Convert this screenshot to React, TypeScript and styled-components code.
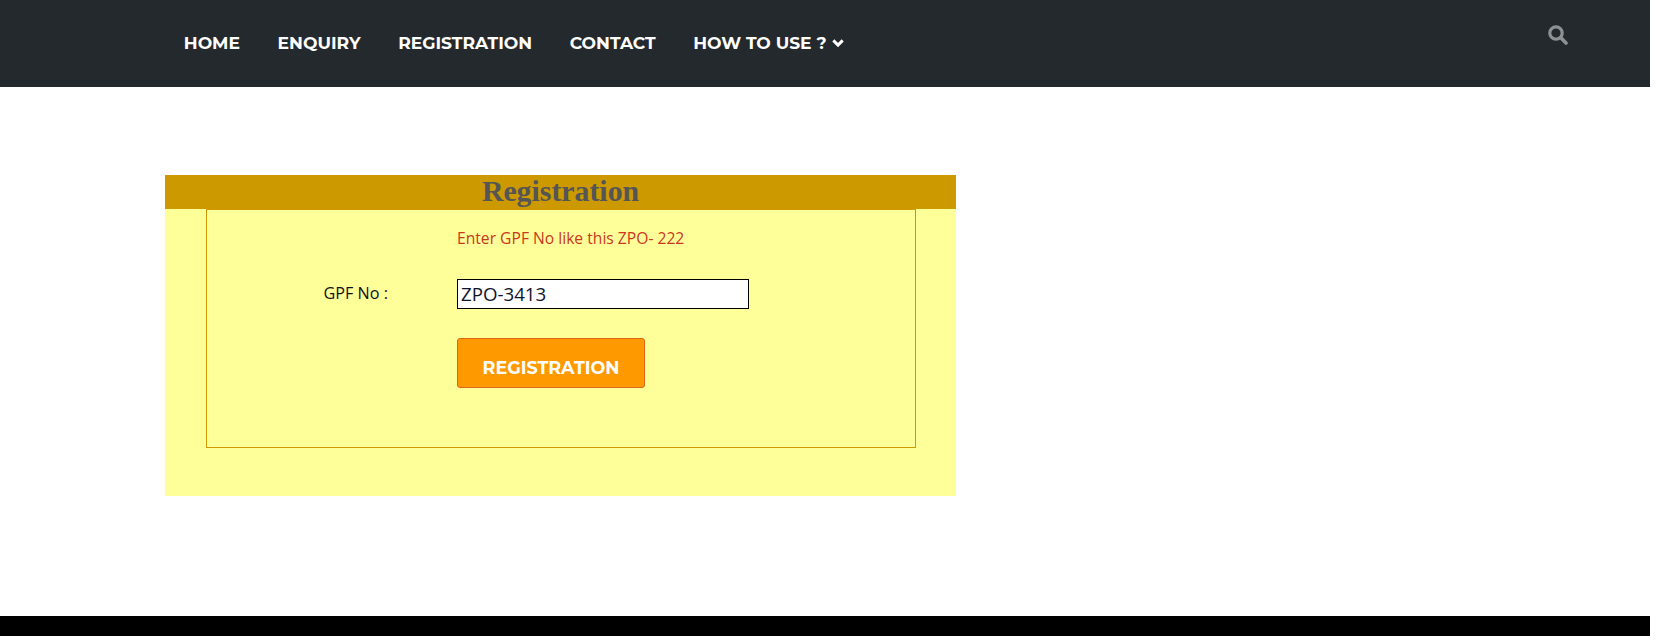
import React from "react";
import styled, { createGlobalStyle } from "styled-components";

const Global = createGlobalStyle`
  html, body { margin: 0; padding: 0; background: #fff; overflow: hidden; }
  body { font-family: "Open Sans", "Liberation Sans", sans-serif; }
`;
const Page = styled.div`
  width: 1650px; height: 642px; display: flex; flex-direction: column; background: #fff;
`;
const Header = styled.header`
  height: 87px; background: #24292d; display: flex; justify-content: space-between;
  padding: 0 82px 0 165px; flex: none;
`;
const Nav = styled.nav`display: flex; align-items: center; height: 85px;`;
const NavLink = styled.a`
  font-family: Montserrat, Inter, "Liberation Sans", sans-serif; font-weight: 700; font-size: 17.15px;
  color: #fff; padding: 0 18.8px; display: flex; align-items: center; gap: 5px;
`;
const SearchBtn = styled.div`color: #8e9194; padding-top: 25px; line-height: 0;`;
const Main = styled.main`flex: 1; padding-top: 88px;`;
const Panel = styled.section`
  margin-left: 165px; width: 791px; height: 321px; background: #ffff99;
`;
const Title = styled.h2`
  margin: 0; height: 34px; background: #cc9900; color: #555; text-align: center;
  font: 700 29.8px/32px "Liberation Serif", serif;
`;
const Frame = styled.div`
  margin: 0 40px 0 41px; height: 239px; box-sizing: border-box; border: 1px solid #cc9900;
  display: grid; grid-template-columns: 250px 1fr; align-content: start; padding-top: 18px;
`;
const Hint = styled.div`
  grid-column: 2; color: #c9381c; font-size: 15.65px; line-height: 20px; height: 51px;
`;
const Label = styled.label`
  color: #111; font-size: 16.2px; text-align: right; padding-right: 69px; line-height: 28px;
`;
const Input = styled.input`
  width: 292px; height: 30px; box-sizing: border-box; border: 1px solid #000; background: #fff;
  padding: 0 3px 2px; font: 18.7px "Open Sans", sans-serif; color: #10142a; outline: 0; display: block;
`;
const Button = styled.button`
  grid-column: 2; width: 188px; height: 50px; margin-top: 29px; padding: 8px 0 0; background: #ff9900;
  border: 1px solid #e0641a; border-radius: 3px; color: #fff;
  font: 700 17.5px Montserrat, Inter, "Liberation Sans", sans-serif;
`;
const Footer = styled.footer`height: 20px; background: #000; margin-bottom: 6px; width: 1650px; flex: none;`;

const Chevron = () => (
  <svg width="12" height="12" viewBox="0 0 12 12" fill="none" stroke="currentColor" strokeWidth="3"><path d="M1.3 3.4 6 8.1l4.7-4.7" /></svg>
);
const Search = () => (
  <svg width="20" height="20" viewBox="0 0 20 20" fill="none" stroke="currentColor"><circle cx="8" cy="8" r="6.2" strokeWidth="3.2" /><path d="M12.6 12.6 18 18" strokeWidth="3.6" strokeLinecap="round" /></svg>
);

export default function App() {
  return (
    <Page>
      <Global />
      <Header>
        <Nav>
          <NavLink>HOME</NavLink>
          <NavLink>ENQUIRY</NavLink>
          <NavLink>REGISTRATION</NavLink>
          <NavLink>CONTACT</NavLink>
          <NavLink>HOW TO USE ? <Chevron /></NavLink>
        </Nav>
        <SearchBtn><Search /></SearchBtn>
      </Header>
      <Main>
        <Panel>
          <Title>Registration</Title>
          <Frame>
            <Hint>Enter GPF No like this ZPO- 222</Hint>
            <Label>GPF No :</Label>
            <Input defaultValue="ZPO-3413" />
            <Button>REGISTRATION</Button>
          </Frame>
        </Panel>
      </Main>
      <Footer />
    </Page>
  );
}
